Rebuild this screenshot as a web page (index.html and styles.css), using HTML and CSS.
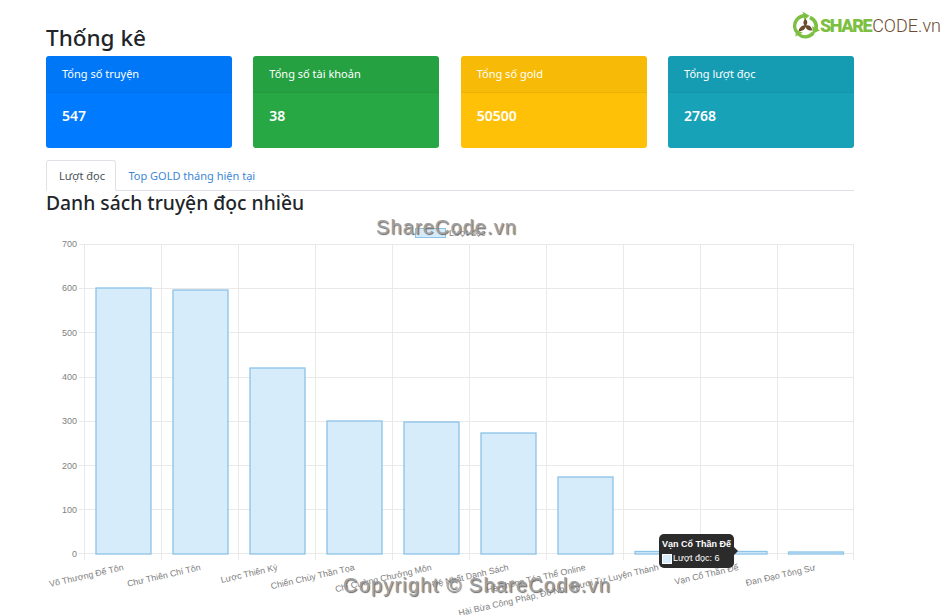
FILE: index.html
```html
<!DOCTYPE html>
<html lang="vi">
<head>
<meta charset="utf-8">
<title>Thống kê</title>
<link rel="stylesheet" href="styles.css">
</head>
<body>
<main class="page">
  <h1 class="page-title">Thống kê</h1>
  <section class="cards">
    <article class="card card-blue"><div class="card-head">Tổng số truyện</div><div class="card-body">547</div></article>
    <article class="card card-green"><div class="card-head">Tổng số tài khoản</div><div class="card-body">38</div></article>
    <article class="card card-yellow"><div class="card-head">Tổng số gold</div><div class="card-body">50500</div></article>
    <article class="card card-teal"><div class="card-head">Tổng lượt đọc</div><div class="card-body">2768</div></article>
  </section>
  <nav class="tabs">
    <a class="tab tab-active">Lượt đọc</a>
    <a class="tab">Top GOLD tháng hiện tại</a>
  </nav>
  <h2 class="section-title">Danh sách truyện đọc nhiều</h2>
  <svg class="chart" viewBox="46 215 808 400" width="808" height="400" xmlns="http://www.w3.org/2000/svg">
    <g class="grid">
      <path d="M84.500 244V560M161.500 244V560M238.500 244V560M315.500 244V560M392.500 244V560M469.500 244V560M546.500 244V560M623.500 244V560M700.500 244V560M777.500 244V560M853.500 244V560"/>
      <path d="M79 244.500H854M79 288.500H854M79 332.500H854M79 377.500H854M79 421.500H854M79 465.500H854M79 509.500H854M79 553.500H854"/>
    </g>
    <g class="y-labels">
      <text x="77" y="247">700</text>
      <text x="77" y="291">600</text>
      <text x="77" y="336">500</text>
      <text x="77" y="380">400</text>
      <text x="77" y="424">300</text>
      <text x="77" y="469">200</text>
      <text x="77" y="513">100</text>
      <text x="77" y="557">0</text>
    </g>
    <g class="bars">
      <rect x="96" y="288" width="55" height="266"/>
      <rect x="173" y="290" width="55" height="264"/>
      <rect x="250" y="368" width="55" height="186"/>
      <rect x="327" y="421" width="55" height="133"/>
      <rect x="404" y="422" width="55" height="132"/>
      <rect x="481" y="433" width="55" height="121"/>
      <rect x="558" y="477" width="55" height="77"/>
      <rect x="635" y="551.500" width="55" height="2.500"/>
      <rect x="712" y="551.500" width="55" height="2.500"/>
      <rect x="788.500" y="552" width="55" height="2"/>
    </g>
    <g class="x-labels">
      <text transform="translate(124 570) rotate(-13)">Võ Thượng Đế Tôn</text>
      <text transform="translate(201 570) rotate(-13)">Chư Thiên Chí Tôn</text>
      <text transform="translate(278 570) rotate(-13)">Lược Thiên Ký</text>
      <text transform="translate(355 570) rotate(-13)">Chiến Chùy Thần Tọa</text>
      <text transform="translate(432 570) rotate(-13)">Chí Cường Chưởng Môn</text>
      <text transform="translate(509 570) rotate(-13)">Đệ Nhất Danh Sách</text>
      <text transform="translate(586 570) rotate(-13)">Hệ Thống Tóa Thể Online</text>
      <text transform="translate(659 570) rotate(-13)">Hài Bừa Công Pháp, Đồ Nhi Ngươi Tự Luyện Thành</text>
      <text transform="translate(739 570) rotate(-13)">Vạn Cổ Thần Đế</text>
      <text transform="translate(816 570) rotate(-13)">Đan Đạo Tông Sư</text>
    </g>
    <g class="legend">
      <rect class="legend-box" x="415.500" y="228.500" width="30" height="9"/>
      <text class="legend-text" x="449" y="236">Lượt đọc</text>
    </g>
    <g class="tooltip">
      <rect class="tooltip-bg" x="659" y="534" width="75" height="34" rx="5"/>
      <path class="tooltip-bg" d="M734 547L738 551L734 555Z"/>
      <text class="tooltip-title" x="662" y="547">Vạn Cổ Thần Đế</text>
      <rect class="tooltip-key" x="662.500" y="554.500" width="9" height="9"/>
      <text class="tooltip-text" x="673" y="561">Lượt đọc: 6</text>
    </g>
  </svg>
</main>
<a class="logo">
  <svg class="logo-mark" viewBox="1 0 27 27" width="28" height="28" xmlns="http://www.w3.org/2000/svg">
    <path class="logo-ring" d="M4 21A11.500 11.500 0 0 1 12 3L11 0.500L18 4.500L12.500 9L12.500 6.500A8 8 0 0 0 7 19.500Z"/>
    <path class="logo-ring" d="M19 4.500A11.500 11.500 0 0 1 26 17.500L28 18.500L21 22L20.500 14.500L22.500 15.800A8 8 0 0 0 17.500 8Z"/>
    <path class="logo-ring" d="M23 22A11.500 11.500 0 0 1 6 23.500L4.500 25L4.500 17.500L11.500 21L9 22A8 8 0 0 0 20 20Z"/>
    <path class="logo-leaf" d="M14 7.500C16.500 10 16 12.500 14.500 14C17 13 20 15 20.500 18.500C17.500 19.500 15 18 14 15.500C13.500 18 11 20 7.500 19C8 16 10.500 14 13 14C11.500 12 11.500 9.500 14 7.500Z"/>
  </svg>
  <span class="logo-share">SHARE</span><span class="logo-code">CODE.vn</span>
</a>
<div class="watermark watermark-top">ShareCode.vn</div>
<div class="watermark watermark-bottom">Copyright © ShareCode.vn</div>
</body>
</html>
```
FILE: styles.css
```css
* { box-sizing: border-box; }
html, body { margin: 0; height: 615px; overflow: hidden; background: #fff; }
body { font-family: "Noto Sans", "Open Sans", sans-serif; color: #212529; position: relative; }
.page { width: 808px; margin-left: 46px; padding-top: 22px; display: flex; flex-direction: column; }
.page-title { margin: 0 0 2px; font-size: 22.500px; line-height: 32px; font-weight: 500; }
.cards { display: grid; grid-template-columns: repeat(4, 186px); column-gap: 21.350px; }
.card { height: 92px; border-radius: 3px; color: #fff; display: flex; flex-direction: column; overflow: hidden; }
.card-head { height: 37px; padding: 0 16px; font-size: 11px; line-height: 35px; background: rgba(0,0,0,.03); border-bottom: 1px solid rgba(0,0,0,.04); }
.card-body { flex: 1; padding: 0 16px; font-size: 14px; line-height: 45px; font-weight: 600; }
.card-blue { background: #007bff; }
.card-green { background: #28a745; }
.card-yellow { background: #ffc107; }
.card-teal { background: #17a2b8; }
.tabs { display: flex; margin-top: 12px; height: 31px; border-bottom: 1px solid #dee2e6; }
.tab { padding: 0 12px; font-size: 11px; line-height: 31px; color: #3d87d4; }
.tab-active { height: 31px; padding-right: 10.500px; color: #495057; background: #fff; border: 1px solid #dee2e6; border-bottom-color: #fff; border-radius: 3px 3px 0 0; line-height: 30px; }
.section-title { margin: -1px 0 1px; font-size: 19.300px; line-height: 26px; font-weight: 500; }
.chart { display: block; margin-top: -2px; overflow: hidden; }
.grid path { fill: none; stroke: #e9e9e9; stroke-width: 1; }
.y-labels text { font: 9px "Liberation Sans", Arial, sans-serif; fill: #808080; text-anchor: end; }
.x-labels text { font: 8.800px "Liberation Sans", Arial, sans-serif; fill: #808080; text-anchor: end; }
.bars rect { fill: #d7ecfb; stroke: #8cc3e6; stroke-width: 1.300; }
.legend-box { fill: #d7ecfb; stroke: #8cc3e6; }
.legend-text { font: 9px "Liberation Sans", Arial, sans-serif; fill: #808080; }
.tooltip-bg { fill: #2b2b2b; }
.tooltip-title { font: bold 9px "Liberation Sans", Arial, sans-serif; fill: #fff; }
.tooltip-text { font: 9px "Liberation Sans", Arial, sans-serif; fill: #fff; }
.tooltip-key { fill: #d7ecfb; stroke: #fff; }
.logo { position: absolute; left: 792px; top: 11px; display: flex; align-items: center; height: 28px; font-family: Roboto, "Open Sans", sans-serif; font-size: 18px; }
.logo-mark { flex: none; }
.logo-ring { fill: #7cbf42; }
.logo-leaf { fill: #6b4a2e; }
.logo-share { font-weight: 900; color: #7cbf42; letter-spacing: -1.400px; }
.logo-code { margin-left: 1px; color: #6b4a2e; font-weight: 300; letter-spacing: 0; }
.watermark { position: absolute; font-family: "Liberation Sans", Arial, sans-serif; font-size: 20px; line-height: 24px; color: #a0a0a0; text-shadow: 1px 1px 1px #666; white-space: nowrap; }
.watermark-top { left: 376px; top: 215px; letter-spacing: 1.100px; }
.watermark-bottom { left: 343px; top: 573px; letter-spacing: 1.200px; }
```
